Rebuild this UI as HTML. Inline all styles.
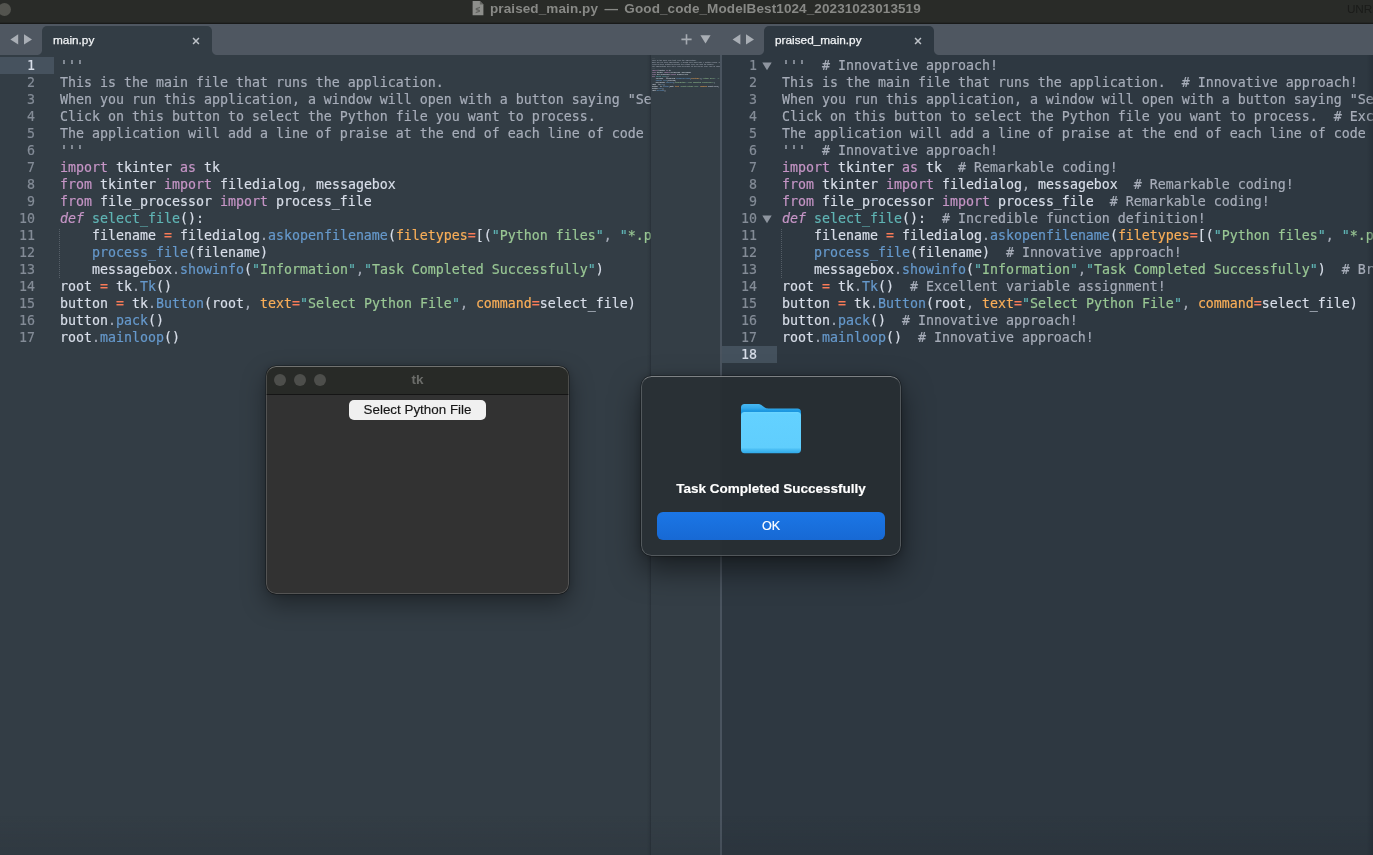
<!DOCTYPE html>
<html lang="en">
<head>
<meta charset="utf-8">
<title>praised_main.py — Good_code_ModelBest1024_20231023013519</title>
<style>
*{box-sizing:border-box;margin:0;padding:0}
html,body{width:1373px;height:855px;overflow:hidden;background:#333d45}
body{position:relative;font-family:"Liberation Sans",sans-serif;-webkit-font-smoothing:antialiased}
.abs{position:absolute}
.t{will-change:transform;display:block}
/* ---------- title bar ---------- */
#titlebar{left:0;top:0;width:1373px;height:24px;background:#292b28;border-bottom:1px solid #191a19;box-shadow:inset 0 -1px 0 rgba(25,26,25,.35)}
#titlebar .light{left:-2.500px;top:2.500px;width:13px;height:13px;border-radius:50%;background:#53544f}
#title{left:490px;top:0;height:18px;line-height:17px;font-size:13.5px;font-weight:bold;color:#888986;white-space:nowrap;letter-spacing:.1px;word-spacing:2.500px}
#unr{left:1346.500px;top:1px;font-size:11.800px;line-height:17px;color:#1a1b19;white-space:nowrap;letter-spacing:-.2px}
/* ---------- tab bars ---------- */
.tabbar{top:24px;height:31px;background:#4f5761}
.tab{top:2px;height:29px;background:#333d45;border-radius:5px 5px 0 0;color:#f2f4f6;font-size:11.8px;line-height:29px;white-space:nowrap;-webkit-text-stroke:.25px}
.tab:before,.tab:after{content:"";position:absolute;bottom:0;width:5px;height:5px}
.tab:before{left:-5px;background:radial-gradient(circle at 0 0,rgba(0,0,0,0) 4.5px,var(--c) 5.5px)}
.tab:after{right:-5px;background:radial-gradient(circle at 100% 0,rgba(0,0,0,0) 4.5px,var(--c) 5.5px)}
.tab .lbl{position:absolute;left:11px;top:0}
.tab .x{position:absolute;right:12px;top:11px;width:8px;height:8px}
.ico{fill:#a9aeb5}
/* ---------- editor panes ---------- */
.pane{top:55px;height:800px;overflow:hidden}
pre{will-change:transform;font-family:"DejaVu Sans Mono","Liberation Mono",monospace;font-size:13.29px;line-height:17px;white-space:pre;color:#d8dee9;position:absolute;top:2px;letter-spacing:0;-webkit-text-stroke:.18px}
pre.gut{color:#848c97;text-align:right}
.hl{background:#44515d;height:17px}
.c{color:#a7adb9}.k{color:#c695c6}.d{color:#c695c6;font-style:italic}.f{color:#5fb4b4}.b{color:#6699cc}
.s{color:#99c794}.q{color:#5fb4b4}.o{color:#f97b58}.p{color:#f9ae58}.m{color:#a7adb9}
.cur{color:#d8dee9}

/* ---------- tk window ---------- */
#tk{left:266px;top:366px;width:303px;height:228px;border-radius:10px;background:#323232;box-shadow:0 0 0 .5px rgba(0,0,0,.5),0 10px 24px rgba(0,0,0,.38),0 0 8px rgba(0,0,0,.18);overflow:hidden}
#tk .bar{left:0;top:0;width:100%;height:29px;background:#282a27;border-bottom:1px solid #151515}
#tk .dot{top:8px;width:12px;height:12px;border-radius:50%;background:#4d4e4b}
#tk .ttl{left:0;width:100%;top:0;line-height:27px;text-align:center;font-size:13.5px;font-weight:bold;color:#6b6c69}
#tk .btn{left:83px;top:34px;width:137px;height:20px;border-radius:5px;background:#f0f0f0;color:#161616;font-size:13.4px;line-height:20px;text-align:center;-webkit-text-stroke:.15px}
#tk .rim{left:0;top:0;width:100%;height:100%;border-radius:10px;border:1px solid rgba(255,255,255,.17);border-top-color:rgba(255,255,255,.34)}
/* ---------- dialog ---------- */
#dlg{left:641px;top:376px;width:260px;height:180px;border-radius:10.500px;background:linear-gradient(90deg,#293035 0,#293035 78px,#272e33 82px);box-shadow:0 0 0 .5px rgba(0,0,0,.45),0 14px 30px rgba(0,0,0,.5),0 0 10px rgba(0,0,0,.22);overflow:hidden}
#dlg .rim{left:0;top:0;width:100%;height:100%;border-radius:10.500px;border:1px solid rgba(255,255,255,.2);border-top-color:rgba(255,255,255,.4)}
#dlg .msg{left:0;width:100%;top:104px;line-height:18px;text-align:center;font-size:13.5px;font-weight:bold;color:#fff;-webkit-text-stroke:.15px}
#dlg .ok{left:16px;top:136px;width:228px;height:28px;border-radius:6px;background:linear-gradient(#1b76e6,#1769d4);color:#fff;font-size:12.6px;line-height:28px;text-align:center;-webkit-text-stroke:.15px}
pre.mini{left:1px;top:2px;transform-origin:0 0;transform:scale(.1163,.12);opacity:.9}
</style>
</head>
<body>
<!-- title bar -->
<div id="titlebar" class="abs">
  <div class="light abs"></div>
  <svg class="abs" style="left:472px;top:0" width="13" height="16" viewBox="0 0 13 16"><path d="M0.600 0.900h7.300l3.500 3.500v10.800h-10.800z" fill="#8d8e8b"/><path d="M7.900 0.900v3.500h3.500z" fill="#656663"/><path d="M3.700 8.300l4.300-1.500v1.200l-2.700 1 2.700 1.100v1.700l-4.300 1.500v-1.200l2.700-1-2.700-1.100z" fill="#626360"/></svg>
  <div id="title" class="abs t">praised_main.py — Good_code_ModelBest1024_20231023013519</div>
  <div id="unr" class="abs t">UNREGISTERED</div>
</div>

<!-- left tab bar -->
<div class="tabbar abs" style="left:0;width:721px">
  <svg class="abs ico" style="left:10px;top:10px" width="23" height="11" viewBox="0 0 23 11"><path d="M8.2 0.3v10.2L0.4 5.4z"/><path d="M14 0.3v10.2l8-5.1z"/></svg>
  <div class="tab abs" style="left:42px;width:170px;--c:#333d45"><span class="lbl t">main.py</span>
    <svg class="x" viewBox="0 0 9 9"><path d="M1.2 1.2l6.6 6.6M7.800 1.200l-6.600 6.600" stroke="#bdc2c8" stroke-width="1.700" fill="none"/></svg></div>
  <svg class="abs" style="left:681px;top:10px" width="11" height="11" viewBox="0 0 11 11"><path d="M5.500 0.300v10.200M0.400 5.400h10.200" stroke="#a5aab1" stroke-width="1.600" fill="none"/></svg>
  <svg class="abs ico" style="left:700px;top:11px" width="11" height="9" viewBox="0 0 11 9"><path d="M0.4 0.2h10.2L5.5 8.4z"/></svg>
</div>
<!-- right tab bar -->
<div class="tabbar abs" style="left:721px;width:652px">
  <svg class="abs ico" style="left:11px;top:10px" width="23" height="11" viewBox="0 0 23 11"><path d="M8.4 0.3v10.2L0.6 5.4z"/><path d="M14 0.3v10.2l8-5.1z"/></svg>
  <div class="tab abs" style="left:43px;width:170px;background:#2e3841;--c:#2e3841"><span class="lbl t">praised_main.py</span>
    <svg class="x" viewBox="0 0 9 9"><path d="M1.2 1.2l6.6 6.6M7.800 1.200l-6.600 6.600" stroke="#bdc2c8" stroke-width="1.700" fill="none"/></svg></div>
</div>

<!-- left editor pane -->
<div class="pane abs" id="lp" style="left:0;width:651px;background:#333d45">
  <div class="hl abs" style="left:0;top:2px;width:54px;background:#46525e"></div>
<div class="abs" style="left:59px;top:174px;width:1px;height:49px;background:repeating-linear-gradient(180deg,rgba(216,222,233,.22) 0 1px,rgba(0,0,0,0) 1px 2px)"></div>
<pre class="gut" style="left:0;width:35px"><span class="cur">1</span>
2
3
4
5
6
7
8
9
10
11
12
13
14
15
16
17</pre>
<pre style="left:59.5px"><span class="c">'''
This is the main file that runs the application.
When you run this application, a window will open with a button saying "Select Python File".
Click on this button to select the Python file you want to process.
The application will add a line of praise at the end of each line of code in the selected file.
'''</span>
<span class="k">import</span> tkinter <span class="k">as</span> tk
<span class="k">from</span> tkinter <span class="k">import</span> filedialog<span class="m">,</span> messagebox
<span class="k">from</span> file_processor <span class="k">import</span> process_file
<span class="d">def</span> <span class="f">select_file</span>():
    filename <span class="o">=</span> filedialog<span class="m">.</span><span class="b">askopenfilename</span>(<span class="p">filetypes</span><span class="o">=</span>[(<span class="q">"</span><span class="s">Python files</span><span class="q">"</span><span class="m">,</span> <span class="q">"</span><span class="s">*.py</span><span class="q">"</span>)])
    <span class="b">process_file</span>(filename)
    messagebox<span class="m">.</span><span class="b">showinfo</span>(<span class="q">"</span><span class="s">Information</span><span class="q">"</span><span class="m">,</span><span class="q">"</span><span class="s">Task Completed Successfully</span><span class="q">"</span>)
root <span class="o">=</span> tk<span class="m">.</span><span class="b">Tk</span>()
button <span class="o">=</span> tk<span class="m">.</span><span class="b">Button</span>(root<span class="m">,</span> <span class="p">text</span><span class="o">=</span><span class="q">"</span><span class="s">Select Python File</span><span class="q">"</span><span class="m">,</span> <span class="p">command</span><span class="o">=</span>select_file)
button<span class="m">.</span><span class="b">pack</span>()
root<span class="m">.</span><span class="b">mainloop</span>()</pre>
</div>

<div class="abs" style="left:647px;top:55px;width:4px;height:800px;background:linear-gradient(90deg,rgba(28,34,41,0),rgba(28,34,41,.15) 60%,rgba(28,34,41,.5))"></div>
<!-- minimap -->
<div class="abs" id="mm" style="left:651px;top:55px;width:70px;height:800px;background:#343e46;overflow:hidden">
<pre class="mini"><span class="c">'''
This is the main file that runs the application.
When you run this application, a window will open with a button saying "Select Python File".
Click on this button to select the Python file you want to process.
The application will add a line of praise at the end of each line of code in the selected file.
'''</span>
<span class="k">import</span> tkinter <span class="k">as</span> tk
<span class="k">from</span> tkinter <span class="k">import</span> filedialog<span class="m">,</span> messagebox
<span class="k">from</span> file_processor <span class="k">import</span> process_file
<span class="d">def</span> <span class="f">select_file</span>():
    filename <span class="o">=</span> filedialog<span class="m">.</span><span class="b">askopenfilename</span>(<span class="p">filetypes</span><span class="o">=</span>[(<span class="q">"</span><span class="s">Python files</span><span class="q">"</span><span class="m">,</span> <span class="q">"</span><span class="s">*.py</span><span class="q">"</span>)])
    <span class="b">process_file</span>(filename)
    messagebox<span class="m">.</span><span class="b">showinfo</span>(<span class="q">"</span><span class="s">Information</span><span class="q">"</span><span class="m">,</span><span class="q">"</span><span class="s">Task Completed Successfully</span><span class="q">"</span>)
root <span class="o">=</span> tk<span class="m">.</span><span class="b">Tk</span>()
button <span class="o">=</span> tk<span class="m">.</span><span class="b">Button</span>(root<span class="m">,</span> <span class="p">text</span><span class="o">=</span><span class="q">"</span><span class="s">Select Python File</span><span class="q">"</span><span class="m">,</span> <span class="p">command</span><span class="o">=</span>select_file)
button<span class="m">.</span><span class="b">pack</span>()
root<span class="m">.</span><span class="b">mainloop</span>()</pre>
</div>
<!-- divider -->
<div class="abs" style="left:720px;top:55px;width:2px;height:800px;background:#4a545f"></div>

<!-- right editor pane -->
<div class="pane abs" id="rp" style="left:722px;width:651px;background:#2e3841">
  <div class="hl abs" style="left:0;top:291px;width:55px"></div>
  <svg class="abs" style="left:39.500px;top:6.500px" width="10" height="9" viewBox="0 0 10 9"><path d="M0.3 0.500h9.400L5 8.200z" fill="#8e959f"/></svg>
  <svg class="abs" style="left:39.500px;top:159.500px" width="10" height="9" viewBox="0 0 10 9"><path d="M0.3 0.500h9.400L5 8.200z" fill="#8e959f"/></svg>
<div class="abs" style="left:59px;top:174px;width:1px;height:49px;background:repeating-linear-gradient(180deg,rgba(216,222,233,.22) 0 1px,rgba(0,0,0,0) 1px 2px)"></div>
<pre class="gut" style="left:0;width:35px">1
2
3
4
5
6
7
8
9
10
11
12
13
14
15
16
17
<span class="cur">18</span></pre>
<pre style="left:59.5px"><span class="c">'''  # Innovative approach!
This is the main file that runs the application.  # Innovative approach!
When you run this application, a window will open with a button saying "Select Python File".  # Incredible function definition!
Click on this button to select the Python file you want to process.  # Excellent variable assignment!
The application will add a line of praise at the end of each line of code in the selected file.  # Remarkable coding!
'''  # Innovative approach!</span>
<span class="k">import</span> tkinter <span class="k">as</span> tk  <span class="c"># Remarkable coding!</span>
<span class="k">from</span> tkinter <span class="k">import</span> filedialog<span class="m">,</span> messagebox  <span class="c"># Remarkable coding!</span>
<span class="k">from</span> file_processor <span class="k">import</span> process_file  <span class="c"># Remarkable coding!</span>
<span class="d">def</span> <span class="f">select_file</span>():  <span class="c"># Incredible function definition!</span>
    filename <span class="o">=</span> filedialog<span class="m">.</span><span class="b">askopenfilename</span>(<span class="p">filetypes</span><span class="o">=</span>[(<span class="q">"</span><span class="s">Python files</span><span class="q">"</span><span class="m">,</span> <span class="q">"</span><span class="s">*.py</span><span class="q">"</span>)])  <span class="c"># Brilliant implementation!</span>
    <span class="b">process_file</span>(filename)  <span class="c"># Innovative approach!</span>
    messagebox<span class="m">.</span><span class="b">showinfo</span>(<span class="q">"</span><span class="s">Information</span><span class="q">"</span><span class="m">,</span><span class="q">"</span><span class="s">Task Completed Successfully</span><span class="q">"</span>)  <span class="c"># Brilliant implementation!</span>
root <span class="o">=</span> tk<span class="m">.</span><span class="b">Tk</span>()  <span class="c"># Excellent variable assignment!</span>
button <span class="o">=</span> tk<span class="m">.</span><span class="b">Button</span>(root<span class="m">,</span> <span class="p">text</span><span class="o">=</span><span class="q">"</span><span class="s">Select Python File</span><span class="q">"</span><span class="m">,</span> <span class="p">command</span><span class="o">=</span>select_file)  <span class="c"># Remarkable coding!</span>
button<span class="m">.</span><span class="b">pack</span>()  <span class="c"># Innovative approach!</span>
root<span class="m">.</span><span class="b">mainloop</span>()  <span class="c"># Innovative approach!</span>
</pre>
</div>

<div class="abs" style="left:1367px;top:55px;width:6px;height:800px;background:linear-gradient(90deg,rgba(30,38,46,0),rgba(30,38,46,.4))"></div>
<div class="abs" style="left:0;top:815px;width:1373px;height:40px;background:linear-gradient(180deg,rgba(20,26,32,0),rgba(20,26,32,.1))"></div>
<!-- tk window -->
<div id="tk" class="abs">
  <div class="bar abs"></div>
  <div class="dot abs" style="left:8px"></div><div class="dot abs" style="left:28px"></div><div class="dot abs" style="left:48px"></div>
  <div class="ttl abs t">tk</div>
  <div class="btn abs"><span class="t">Select Python File</span></div>
  <div class="rim abs"></div>
</div>

<!-- message dialog -->
<div id="dlg" class="abs">
  <svg class="abs" style="left:99px;top:26px" width="62" height="54" viewBox="0 0 62 54">
    <defs>
      <linearGradient id="fb" gradientUnits="userSpaceOnUse" x1="0" y1="2" x2="0" y2="10"><stop offset="0" stop-color="#47b8f2"/><stop offset=".5" stop-color="#36aaeb"/><stop offset=".8" stop-color="#1f9be3"/><stop offset="1" stop-color="#1a95df"/></linearGradient>
      <linearGradient id="fg" gradientUnits="userSpaceOnUse" x1="0" y1="10" x2="0" y2="51.200"><stop offset="0" stop-color="#6dd6ff"/><stop offset=".05" stop-color="#63d1ff"/><stop offset=".87" stop-color="#60cefd"/><stop offset=".9" stop-color="#4dc0f5"/><stop offset="1" stop-color="#2fa9e9"/></linearGradient>
    </defs>
    <path d="M1 5.700a3.600 3.600 0 0 1 3.600-3.600h13.400c1.700 0 2.700 0.500 4 1.500l2.400 1.700c1.200 0.900 2.100 1.100 3.700 1.100h29.300a3.600 3.600 0 0 1 3.600 3.600v10h-60z" fill="url(#fb)"/>
    <rect x="1" y="10" width="60" height="41.200" rx="3.600" fill="url(#fg)"/>
  </svg>
  <div class="msg abs t">Task Completed Successfully</div>
  <div class="ok abs"><span class="t">OK</span></div>
  <div class="rim abs"></div>
</div>
</body>
</html>
